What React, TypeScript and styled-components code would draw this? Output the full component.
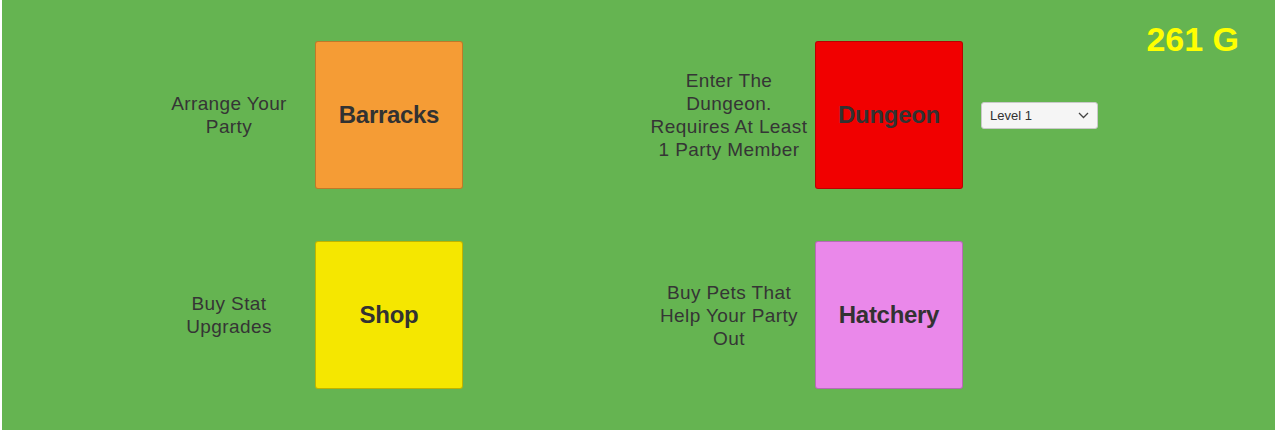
import React from 'react';
import styled, { createGlobalStyle } from 'styled-components';

const GlobalStyle = createGlobalStyle`
  html, body {
    margin: 0;
    padding: 0;
    background: #ffffff;
  }
  body {
    font-family: "Liberation Sans", Arial, sans-serif;
  }
`;

const Screen = styled.div`
  position: relative;
  box-sizing: border-box;
  margin-left: 2px;
  width: 1273px;
  height: 430px;
  background: #65b451;
  padding: 41px 0 0 146px;
`;

const Gold = styled.div`
  position: absolute;
  top: 19px;
  right: 36px;
  color: #ffff00;
  font-size: 34px;
  font-weight: bold;
  line-height: 40px;
`;

const Grid = styled.div`
  display: grid;
  grid-template-columns: 500px 500px;
  grid-auto-rows: 148px;
  row-gap: 52px;
`;

const Station = styled.div`
  display: flex;
  align-items: center;
`;

const Description = styled.div`
  width: 162px;
  margin-right: 5px;
  text-align: center;
  font-size: 19px;
  line-height: 23px;
  color: #353535;
  letter-spacing: 0.4px;
`;

const StationButton = styled.button<{ $color: string }>`
  box-sizing: border-box;
  width: 148px;
  height: 148px;
  flex-shrink: 0;
  background: ${(p) => p.$color};
  border: 1px solid rgba(0, 0, 0, 0.22);
  border-radius: 3px;
  color: #323232;
  font-family: "Liberation Sans", Arial, sans-serif;
  font-size: 24px;
  font-weight: bold;
  letter-spacing: -0.3px;
  padding: 0;
  cursor: pointer;
`;

const LevelSelect = styled.div`
  box-sizing: border-box;
  display: flex;
  align-items: center;
  justify-content: space-between;
  width: 117px;
  height: 27px;
  margin-left: 18px;
  padding: 0 8px 0 8px;
  background: #f5f5f5;
  border: 1px solid #c9c9c9;
  border-radius: 3px;
  font-size: 13px;
  color: #323232;
`;

const Chevron = () => (
  <svg width="11" height="7" viewBox="0 0 11 7" fill="none">
    <path d="M1 1 L5.5 5.5 L10 1" stroke="#444" strokeWidth="1.3" />
  </svg>
);

type Item = { text: string[]; label: string; color: string; select?: boolean };

const items: Item[] = [
  { text: ['Arrange Your', 'Party'], label: 'Barracks', color: '#f59c35' },
  {
    text: ['Enter The', 'Dungeon.', 'Requires At Least', '1 Party Member'],
    label: 'Dungeon',
    color: '#f10000',
    select: true,
  },
  { text: ['Buy Stat', 'Upgrades'], label: 'Shop', color: '#f5e700' },
  { text: ['Buy Pets That', 'Help Your Party', 'Out'], label: 'Hatchery', color: '#ea88ea' },
];

const App: React.FC = () => {
  return (
    <>
      <GlobalStyle />
      <Screen>
        <Gold>261 G</Gold>
        <Grid>
          {items.map((it) => (
            <Station key={it.label}>
              <Description>
                {it.text.map((line, i) => (
                  <div key={i}>{line}</div>
                ))}
              </Description>
              <StationButton $color={it.color}>{it.label}</StationButton>
              {it.select && (
                <LevelSelect>
                  <span>Level 1</span>
                  <Chevron />
                </LevelSelect>
              )}
            </Station>
          ))}
        </Grid>
      </Screen>
    </>
  );
};

export default App;
